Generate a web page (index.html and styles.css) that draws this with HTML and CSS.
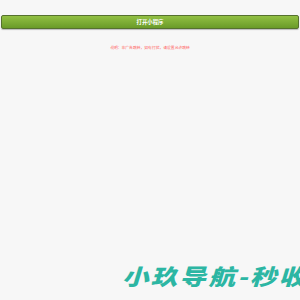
FILE: index.html
```html
<!DOCTYPE html>
<html lang="zh">
<head>
<meta charset="utf-8">
<link rel="stylesheet" href="styles.css">
</head>
<body>
<div class="page">
  <div class="btn">打开小程序</div>
  <p class="note">说明：非广告跳转，如有打扰，请设置允许跳转</p>
  <div class="logo">小玖导航-秒收</div>
</div>
</body>
</html>
```
FILE: styles.css
```css
html, body {
  margin: 0;
  padding: 0;
  background: #f7f7f7;
  overflow: hidden;
}
.page {
  height: 300px;
  display: flex;
  flex-direction: column;
  font-family: "Noto Sans CJK SC", "Noto Sans", sans-serif;
}
.btn {
  margin: 15px 1px 0 1px;
  height: 12px;
  border: 1px solid #56712f;
  border-radius: 2px;
  background: linear-gradient(#92c043, #6a9b28);
  box-shadow: 0 1px 1px rgba(0,0,0,0.25);
  color: #fff;
  font-size: 5.4px;
  font-weight: 700;
  line-height: 12px;
  text-align: center;
}
.note {
  margin: 16px 0 0 0;
  color: #ff5a5a;
  font-size: 3.8px;
  line-height: 6px;
  text-align: center;
}
.logo {
  margin-top: auto;
  margin-bottom: 10px;
  margin-left: 122px;
  white-space: nowrap;
  color: #2cb6a3;
  font-size: 22px;
  font-weight: 900;
  font-style: italic;
  letter-spacing: 2px;
  line-height: 30px;
  transform: scaleX(1.2);
  transform-origin: left center;
}
```
